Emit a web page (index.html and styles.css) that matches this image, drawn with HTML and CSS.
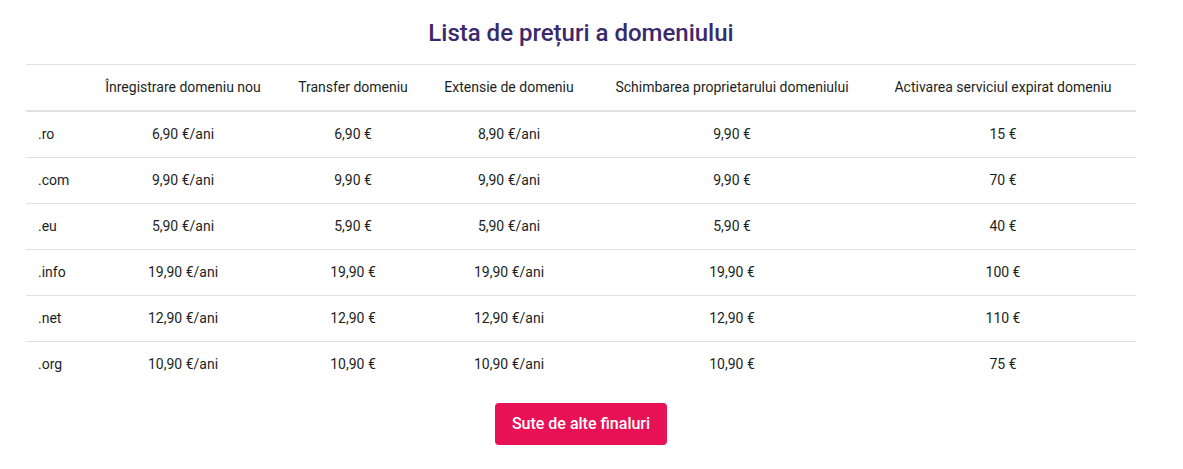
FILE: index.html
```html
<!DOCTYPE html>
<html lang="ro">
<head>
<meta charset="utf-8">
<title>Lista de prețuri a domeniului</title>
<link rel="stylesheet" href="styles.css">
</head>
<body>
<main class="wrap">
  <h2 class="title">Lista de prețuri a domeniului</h2>
  <table class="prices">
    <colgroup>
      <col class="c1"><col class="c2"><col class="c3"><col class="c4"><col class="c5"><col class="c6">
    </colgroup>
    <thead>
      <tr>
        <th></th>
        <th>Înregistrare domeniu nou</th>
        <th>Transfer domeniu</th>
        <th>Extensie de domeniu</th>
        <th>Schimbarea proprietarului domeniului</th>
        <th>Activarea serviciul expirat domeniu</th>
      </tr>
    </thead>
    <tbody>
      <tr><td>.ro</td><td>6,90 €/ani</td><td>6,90 €</td><td>8,90 €/ani</td><td>9,90 €</td><td>15 €</td></tr>
      <tr><td>.com</td><td>9,90 €/ani</td><td>9,90 €</td><td>9,90 €/ani</td><td>9,90 €</td><td>70 €</td></tr>
      <tr><td>.eu</td><td>5,90 €/ani</td><td>5,90 €</td><td>5,90 €/ani</td><td>5,90 €</td><td>40 €</td></tr>
      <tr><td>.info</td><td>19,90 €/ani</td><td>19,90 €</td><td>19,90 €/ani</td><td>19,90 €</td><td>100 €</td></tr>
      <tr><td>.net</td><td>12,90 €/ani</td><td>12,90 €</td><td>12,90 €/ani</td><td>12,90 €</td><td>110 €</td></tr>
      <tr><td>.org</td><td>10,90 €/ani</td><td>10,90 €</td><td>10,90 €/ani</td><td>10,90 €</td><td>75 €</td></tr>
    </tbody>
  </table>
  <div class="actions"><a class="btn" href="#">Sute de alte finaluri</a></div>
</main>
</body>
</html>
```
FILE: styles.css
```css
html, body {
  margin: 0;
  padding: 0;
  background: #fff;
}
body {
  font-family: Roboto, "Liberation Sans", Arial, sans-serif;
  font-size: 14px;
  line-height: 21px;
  color: #1b1f24;
}
.wrap {
  width: 1110px;
  margin-left: 26px;
}
.title {
  margin: 17px 0 15px;
  text-align: center;
  font-size: 24px;
  line-height: 32px;
  font-weight: 500;
  color: #3b2a6b;
}
.prices {
  width: 1110px;
  border-collapse: collapse;
  table-layout: fixed;
}
.c1 { width: 58px; }
.c2 { width: 198px; }
.c3 { width: 142px; }
.c4 { width: 170px; }
.c5 { width: 276px; }
.c6 { width: 266px; }
.prices th,
.prices td {
  padding: 12px;
  text-align: center;
  font-weight: 400;
  border-top: 1px solid #dee2e6;
  white-space: nowrap;
}
.prices th {
  border-bottom: 2px solid #dee2e6;
}
.prices td:first-child {
  text-align: left;
}
.actions {
  display: flex;
  justify-content: center;
  margin-top: 16px;
}
.btn {
  display: inline-block;
  padding: 10px 17px 11px;
  background: #e91156;
  color: #fff;
  border-radius: 4px;
  font-size: 16px;
  line-height: 21px;
  font-weight: 500;
  text-decoration: none;
}
```
